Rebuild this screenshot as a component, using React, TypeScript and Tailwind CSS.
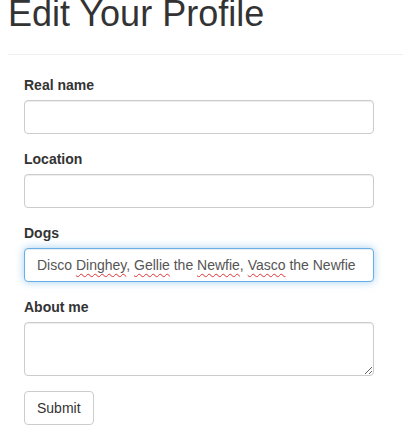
const inputBase =
  'block w-[350px] h-[34px] rounded-[4px] border border-[#ccc] bg-white px-3 py-1.5 text-[14px] leading-[20px] text-[#555] shadow-[inset_0_1px_1px_rgba(0,0,0,0.075)] outline-none';

const Misspelled = ({ children }: { children: string }) => (
  <span className="underline decoration-wavy decoration-[#e03030] decoration-1 underline-offset-[3px]">
    {children}
  </span>
);

const Field = ({ label, children }: { label: string; children: React.ReactNode }) => (
  <div className="mb-[15px]">
    <label className="mb-[5px] block text-[14px] font-bold leading-[20px] text-[#333]">{label}</label>
    {children}
  </div>
);

export default function App() {
  return (
    <div className="h-[429px] overflow-hidden bg-white px-2 font-['Liberation_Sans',Arial,sans-serif] text-[#333]">
      <h1 className="mt-[-6px] text-[36px] font-normal leading-[39.6px] text-[#333]">Edit Your Profile</h1>
      <hr className="mt-5 mb-5 -mr-2 border-0 border-t border-[#eee]" />

      <form className="px-4" onSubmit={(e) => e.preventDefault()}>
        <Field label="Real name">
          <input type="text" className={inputBase} />
        </Field>
        <Field label="Location">
          <input type="text" className={inputBase} />
        </Field>
        <Field label="Dogs">
          <div
            role="textbox"
            className="block w-[350px] h-[34px] whitespace-nowrap rounded-[4px] border border-[#66afe9] bg-white px-3 py-1.5 text-[14px] leading-[20px] text-[#555] shadow-[inset_0_1px_1px_rgba(0,0,0,0.075),0_0_8px_rgba(102,175,233,0.6)]"
          >
            Disco <Misspelled>Dinghey</Misspelled>, <Misspelled>Gellie</Misspelled> the{' '}
            <Misspelled>Newfie</Misspelled>, <Misspelled>Vasco</Misspelled> the Newfie
          </div>
        </Field>
        <Field label="About me">
          <textarea
            rows={2}
            className="block w-[350px] h-[54px] rounded-[4px] border border-[#ccc] bg-white px-3 py-1.5 text-[14px] leading-[20px] text-[#555] shadow-[inset_0_1px_1px_rgba(0,0,0,0.075)] outline-none"
          />
        </Field>
        <button
          type="submit"
          className="h-[34px] rounded-[4px] border border-[#ccc] bg-white px-3 py-1.5 text-[14px] leading-[20px] text-[#333]"
        >
          Submit
        </button>
      </form>
    </div>
  );
}
